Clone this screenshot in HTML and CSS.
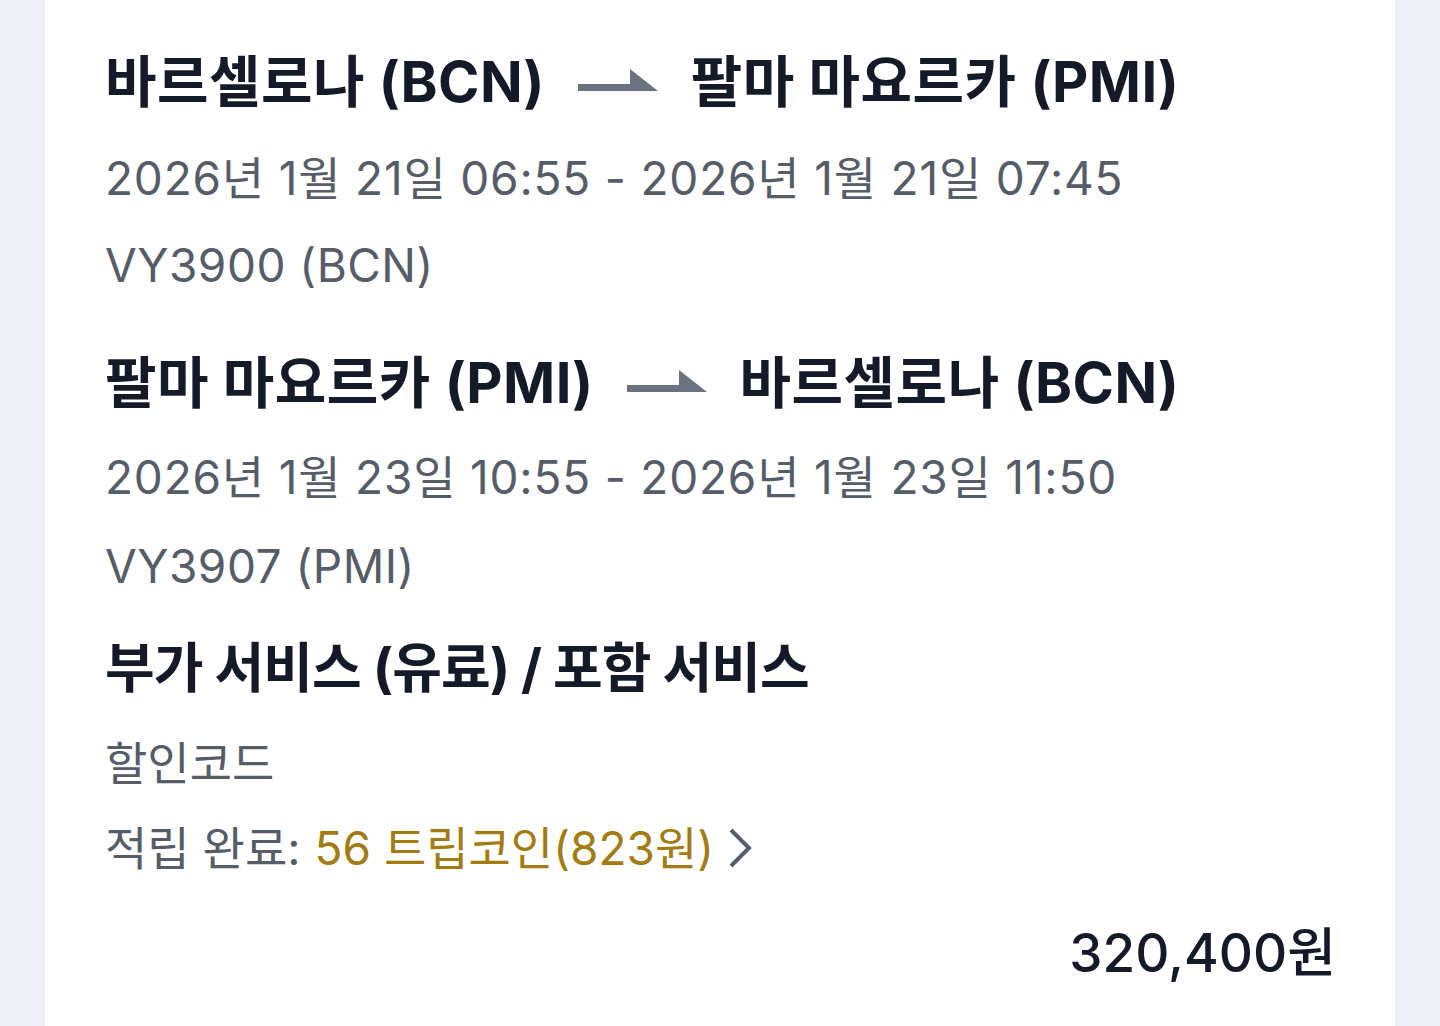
FILE: index.html
```html
<!DOCTYPE html>
<html lang="ko">
<head>
<meta charset="utf-8">
<title>예약 상세</title>
<link rel="stylesheet" href="styles.css">
</head>
<body>
<div class="page">
  <main class="card">
    <section class="segment">
      <h2 class="route">
        <span>바르셀로나 (BCN)</span>
        <svg class="arrow" viewBox="0 0 80 23" aria-hidden="true"><polygon points="0,15 52,15 52,0 80,22 0,22"/></svg>
        <span>팔마 마요르카 (PMI)</span>
      </h2>
      <p class="info date">2026년 1월 21일 06:55 - 2026년 1월 21일 07:45</p>
      <p class="info flight">VY3900 (BCN)</p>
    </section>
    <section class="segment second">
      <h2 class="route">
        <span>팔마 마요르카 (PMI)</span>
        <svg class="arrow" viewBox="0 0 80 23" aria-hidden="true"><polygon points="0,15 52,15 52,0 80,22 0,22"/></svg>
        <span>바르셀로나 (BCN)</span>
      </h2>
      <p class="info date">2026년 1월 23일 10:55 - 2026년 1월 23일 11:50</p>
      <p class="info flight">VY3907 (PMI)</p>
    </section>
    <section class="extras">
      <h2 class="route heading">부가 서비스 (유료) / 포함 서비스</h2>
      <p class="info code">할인코드</p>
      <p class="info points">적립 완료: <span class="gold">56 트립코인(823원)</span>
        <svg class="chev" viewBox="0 0 24 42" aria-hidden="true"><polyline points="3,3 21,21 3,39"/></svg>
      </p>
    </section>
    <div class="total">320,400원</div>
  </main>
</div>
</body>
</html>
```

FILE: styles.css
```css
* { box-sizing: border-box; }
html, body {
  margin: 0;
  padding: 0;
  background: #eef0f5;
}
body {
  font-family: "Inter", "Noto Sans CJK KR", sans-serif;
  color: #141a28;
}
.page {
  padding: 0 45px;
  height: 1026px;
  overflow: hidden;
}
.card {
  background: #ffffff;
  min-height: 1026px;
  padding: 50px 63px 0 60px;
}
.route {
  margin: 0;
  font-size: 56px;
  font-weight: 700;
  line-height: 64px;
  height: 64px;
  display: flex;
  align-items: center;
  gap: 33px;
  letter-spacing: 0.5px;
  white-space: nowrap;
}
.heading {
  font-size: 54px;
  letter-spacing: -0.9px;
}
.arrow {
  width: 80px;
  height: 23px;
  fill: #6b7280;
  flex: none;
  margin-top: -4px;
}
.info {
  margin: 0;
  font-size: 46px;
  font-weight: 400;
  line-height: 56px;
  height: 56px;
  color: #565c68;
  white-space: nowrap;
}
.date { margin-top: 36px; letter-spacing: 0.8px; }
.flight { margin-top: 31px; letter-spacing: 0.5px; }
.second { margin-top: 58px; }
.second .date { margin-top: 34px; }
.second .flight { margin-top: 33px; }
.extras { margin-top: 43px; }
.code { margin-top: 34px; }
.points {
  margin-top: 29px;
  display: flex;
  align-items: center;
}
.gold {
  color: #a27c12;
  margin-left: 14px;
}
.chev {
  width: 24px;
  height: 42px;
  fill: none;
  stroke: #555c6b;
  stroke-width: 4;
  margin-left: 14px;
}
.total {
  margin-top: 45px;
  margin-right: -4px;
  text-align: right;
  font-size: 53px;
  font-weight: 500;
  line-height: 64px;
  color: #141a28;
}
```
